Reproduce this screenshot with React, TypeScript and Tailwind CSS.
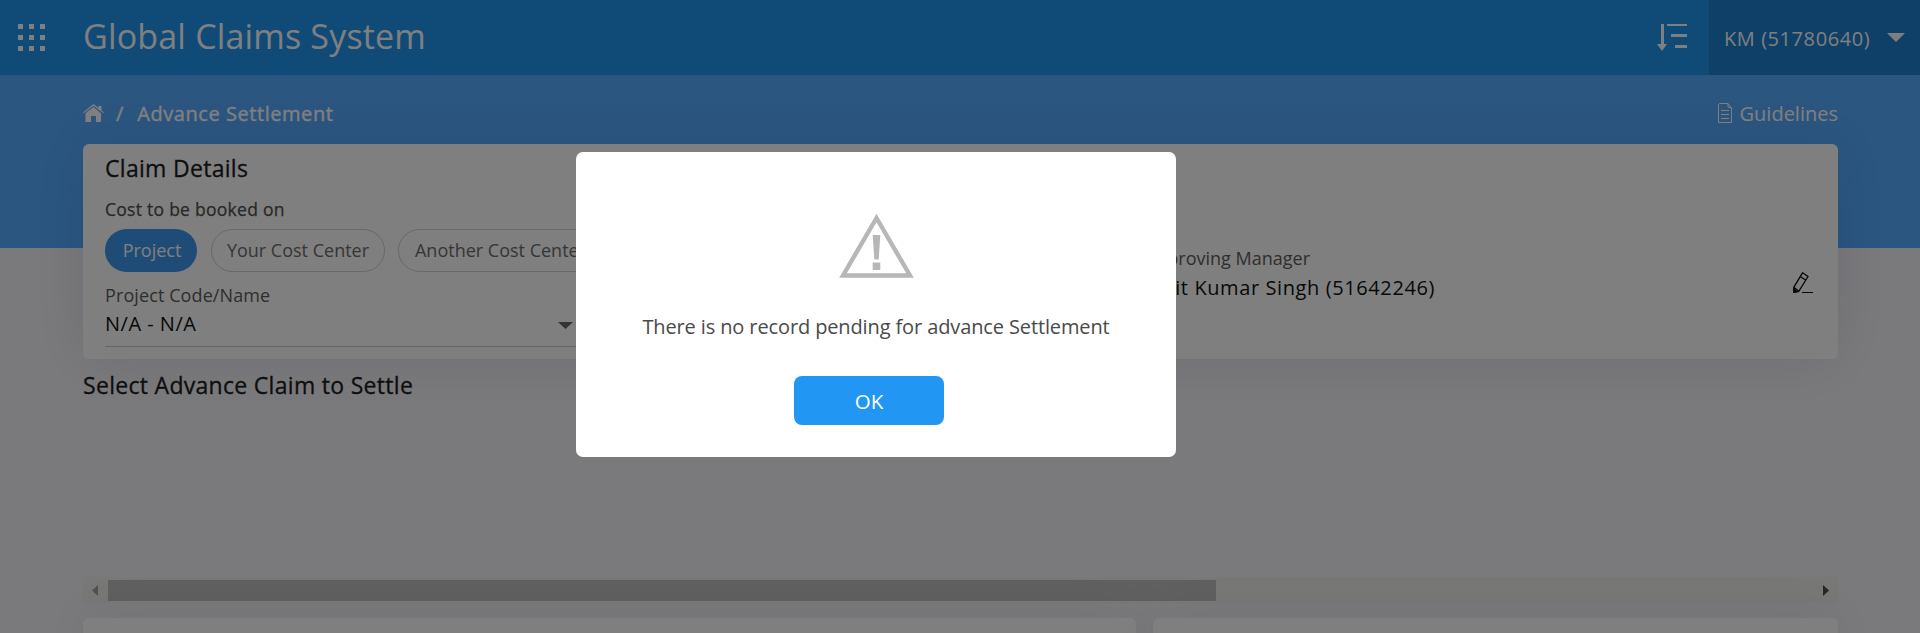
import React from "react";

function AppsIcon() {
  return (
    <svg width="27" height="27" viewBox="0 0 27 27" fill="#fff" shapeRendering="crispEdges">
      {[0, 11, 22].map((y) =>
        [0, 11, 22].map((x) => <rect key={x + "-" + y} x={x} y={y} width="5" height="5" />)
      )}
    </svg>
  );
}

function SortIcon() {
  return (
    <svg width="30" height="27" viewBox="0 0 30 27" fill="#fff">
      <path d="M4 0h3v20h3L5 27 0 20h4zM10 0h20v2H10zM14 10h16v3H14zM18 21h12v3H18z" />
    </svg>
  );
}

function HomeIcon() {
  return (
    <svg width="21" height="18" viewBox="0 0 21 18" fill="#fff">
      <path d="M0 8.600 10.500 0 15.500 4V2h3v4.500L21 8.600 20 9 10.500 1.800 1 9z" />
      <path d="M2.500 9.200 10.500 3l7.500 6.200V18h-5v-6H8v6H2.500z" />
    </svg>
  );
}

function DocIcon() {
  return (
    <svg width="14" height="20" viewBox="0 0 14 20" fill="none" stroke="#fff">
      <path d="M10 .5H1.500L.5 1.500v18h13V5zM10 .5V4l3.500 1M3 7.500h8M3 11.500h8M3 15.500h8" />
    </svg>
  );
}

function EditIcon() {
  return (
    <svg width="20" height="21" viewBox="0 0 20 21" fill="none" stroke="#111" strokeWidth="1.300">
      <path d="M9.500.8 15 4.500 5.800 19.300.8 15.300zM7.500 4.800l5.500 3.500M.8 15.300.8 20.300 5.800 19.300" />
      <path d="M.8 17 3.800 19.600 1 20.500z" fill="#111" />
      <path d="M9 20.500h11" strokeWidth="1" />
    </svg>
  );
}

function WarningIcon() {
  return (
    <svg width="76" height="65" viewBox="0 0 76 65">
      <path d="M38.500 5 5 62.500H72z" fill="none" stroke="#b7b7b7" strokeWidth="4.400" />
      <path d="M34.700 22h7.600l-1.600 24.500h-4.400zM34.700 49.500h7.600V57h-7.600z" fill="#b7b7b7" />
    </svg>
  );
}

function Header() {
  return (
    <header className="flex h-[75px] items-center bg-[#2196f1] text-white">
      <div className="w-[83px] pl-[18px]">
        <AppsIcon />
      </div>
      <h1 className="-mt-[3px] text-[34px] leading-[48px] tracking-[0.18px] whitespace-nowrap">Global Claims System</h1>
      <div className="mr-[22px] ml-auto">
        <SortIcon />
      </div>
      <div className="flex h-full w-[211px] items-center bg-[#1c80d0] pl-[15px] text-xl">
        <span className="w-[163px] pt-[2px] tracking-[0.57px] whitespace-nowrap">KM (51780640)</span>
        <svg width="18" height="9" viewBox="0 0 18 9" fill="#fff">
          <path d="M0 0h18L9 9z" />
        </svg>
      </div>
    </header>
  );
}

function ClaimCard() {
  return (
    <section className="flex h-[215px] rounded-md bg-white pl-[22px] shadow-[0_0_60px_rgba(10,20,90,0.1)]">
      <div className="w-[990px]">
        <h2 className="pt-[9px] text-[23px] leading-[30px] tracking-[0.3px] text-[#1c1c1c] [-webkit-text-stroke:0.3px]">Claim Details</h2>
        <p className="mt-[14px] text-[17.5px] leading-6 tracking-[0.27px] text-[#505050] [-webkit-text-stroke:0.25px]">Cost to be booked on</p>
        <div className="mt-2 flex text-lg leading-6 text-[#6c6c6c]">
          <span className="flex h-[43px] w-[92px] items-center justify-center rounded-full bg-[#3e98ee] pb-[2px] pl-[2px] text-white">Project</span>
          <span className="ml-[14px] flex h-[43px] w-[174px] items-center justify-center rounded-full border border-[#d0d0d8] pb-[2px]">Your Cost Center</span>
          <span className="ml-[13px] flex h-[43px] w-[205px] items-center justify-center rounded-full border border-[#d0d0d8] pb-[2px]">Another Cost Center</span>
        </div>
        <p className="mt-[11px] text-lg leading-6 tracking-[0.1px] text-[#5c5c5c]">Project Code/Name</p>
        <div className="flex h-[40px] w-[480px] items-start border-b border-[#ccc]">
          <span className="pt-[3px] text-xl leading-7 tracking-[0.5px] text-[#111]">N/A - N/A</span>
          <svg className="mt-[15px] mr-[12px] ml-auto" width="15" height="7" viewBox="0 0 15 7" fill="#666">
            <path d="M0 0h15L7.500 7z" />
          </svg>
        </div>
      </div>
      <div className="flex flex-1 items-start pt-[102px]">
        <div className="w-[698px]">
          <p className="w-[215px] text-right text-lg leading-6 whitespace-nowrap text-[#5c5c5c]">Approving Manager</p>
          <p className="mt-1 w-[340px] text-right text-xl leading-7 tracking-[0.6px] whitespace-nowrap text-[#111]">Ajit Kumar Singh (51642246)</p>
        </div>
        <div className="mt-[26px]">
          <EditIcon />
        </div>
      </div>
    </section>
  );
}

function ScrollBar() {
  return (
    <div className="flex h-[26px] items-center bg-[#f1f1ee]">
      <svg className="ml-[9px]" width="6" height="11" viewBox="0 0 6 11" fill="#a3a3a3">
        <path d="M6 0v11L0 5.500z" />
      </svg>
      <div className="ml-[10px] h-[21px] w-[1108px] bg-[#c1c1c1]" />
      <svg className="mr-[9px] ml-auto" width="6" height="11" viewBox="0 0 6 11" fill="#505050">
        <path d="M0 0v11l6-5.500z" />
      </svg>
    </div>
  );
}

export default function App() {
  return (
    <div className="relative h-[633px] w-[1920px] overflow-hidden font-['Open_Sans',sans-serif]">
      <Header />
      <main className="h-[558px] bg-[linear-gradient(to_bottom,#57adff_173px,#f5f4f8_173px)] pr-[82px] pl-[83px]">
        <nav className="flex h-[69px] items-center pt-[7px] text-xl text-white">
          <HomeIcon />
          <span className="ml-3 pt-[2px] [-webkit-text-stroke:0.35px]">/</span>
          <span className="ml-[14px] pt-[2px] tracking-[0.55px] [-webkit-text-stroke:0.35px]">Advance Settlement</span>
          <span className="ml-auto">
            <DocIcon />
          </span>
          <span className="ml-2 pt-[2px]">Guidelines</span>
        </nav>
        <ClaimCard />
        <h2 className="mt-[10px] text-[23px] leading-8 tracking-[0.3px] text-[#1c1c1c] [-webkit-text-stroke:0.3px]">Select Advance Claim to Settle</h2>
        <div className="mt-[176px]">
          <ScrollBar />
        </div>
        <div className="mt-[15px] flex gap-[17px]">
          <div className="h-10 w-[1053px] rounded-t-md bg-white shadow-[0_0_60px_rgba(10,20,90,0.09)]" />
          <div className="h-10 flex-1 rounded-t-md bg-white shadow-[0_0_60px_rgba(10,20,90,0.09)]" />
        </div>
      </main>
      <div className="absolute inset-0 bg-black/50 pt-[152px] pl-[576px]">
        <div role="dialog" className="flex h-[305px] w-[600px] flex-col items-center rounded-[7px] bg-white pt-[61px]">
          <WarningIcon />
          <p className="mt-[34px] text-xl leading-[30px] tracking-[-0.12px] whitespace-nowrap text-[#4a4a4a]">There is no record pending for advance Settlement</p>
          <button className="mt-[34px] mr-[14px] h-[49px] w-[150px] rounded-lg bg-[#2196f3] pt-px text-[20.5px] text-white">OK</button>
        </div>
      </div>
    </div>
  );
}
